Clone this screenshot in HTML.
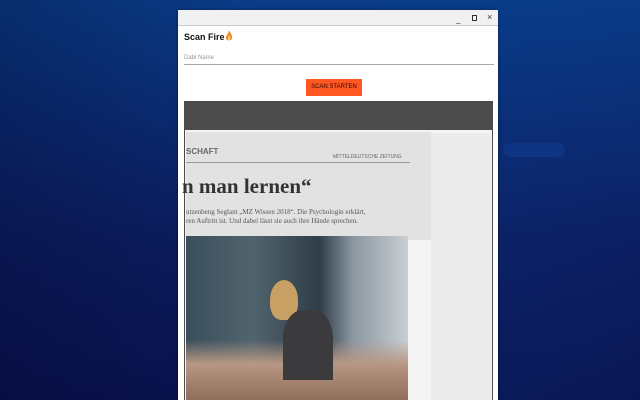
<!DOCTYPE html>
<html><head><style>
*{margin:0;padding:0;box-sizing:border-box}
body{width:640px;height:400px;overflow:hidden;position:relative;font-family:"Liberation Sans",sans-serif;
background:linear-gradient(180deg,#0a3c88 0%,#0b2f78 25%,#0c1d60 60%,#0a1350 100%);}
.abs{position:absolute}
</style></head><body>
<div class="abs" style="left:0;top:0;width:640px;height:400px;background:linear-gradient(90deg,rgba(0,0,30,.25) 0%,rgba(0,0,0,0) 40%,rgba(10,60,140,.15) 80%,rgba(10,50,120,.1) 100%)"></div>
<div class="abs" style="left:503px;top:143px;width:62px;height:14px;background:#14449a;opacity:.4;border-radius:7px"></div>
<div class="abs" style="left:178px;top:10px;width:320px;height:390px;background:#fff;box-shadow:0 0 3px rgba(0,0,0,.4)"></div>
<div class="abs" style="left:178px;top:10px;width:320px;height:16px;background:#f1f1f1;border-bottom:1px solid #ccc"></div>
<div class="abs" style="left:456px;top:15px;font-size:8px;color:#333">_</div>
<div class="abs" style="left:472px;top:15px;width:5px;height:6px;border:1.5px solid #333"></div>
<div class="abs" style="left:487px;top:12px;font-size:9px;color:#333">×</div>
<div class="abs" style="left:184px;top:32px;font-size:9px;font-weight:bold;color:#111">Scan Fire</div>
<svg class="abs" style="left:225px;top:30px" width="8" height="12" viewBox="0 0 8 12"><path d="M4 0C5 3 8 5 7 8.5 6.5 11 1.5 11 1 8.5 0.5 6 3 5 4 0Z" fill="#f08a24"/><path d="M4 5C5 7 6 8 5 10 4 11 2.5 10 3 8.5Z" fill="#fcd06a"/></svg>
<div class="abs" style="left:184px;top:55px;font-size:6px;color:#999">Dabl Name</div>
<div class="abs" style="left:184px;top:64px;width:310px;height:1px;background:#aaa"></div>
<div class="abs" style="left:306px;top:79px;width:56px;height:17px;background:#ff5722;font-size:6px;color:#2a0a00;text-align:center;line-height:17px">SCAN STARTEN</div>
<div class="abs" style="left:184px;top:101px;width:309px;height:299px;background:#4b4b4b"></div>
<div class="abs" style="left:185px;top:130px;width:307px;height:270px;background:#f4f4f4"></div>
<div class="abs" style="left:431px;top:133px;width:60px;height:267px;background:#ebebeb"></div>
<div class="abs" style="left:186px;top:132px;width:245px;height:108px;background:#e2e2e2"></div>
<div class="abs" style="left:186px;top:147px;font-size:8px;font-weight:bold;color:#666">SCHAFT</div>
<div class="abs" style="left:333px;top:154px;font-size:5px;color:#666">MITTELDEUTSCHE ZEITUNG</div>
<div class="abs" style="left:186px;top:162px;width:224px;height:1px;background:#999"></div>
<div class="abs" style="left:182px;top:174px;font-family:'Liberation Serif',serif;font-size:21px;font-weight:bold;color:#333">n man lernen“</div>
<div class="abs" style="left:186px;top:208px;font-family:'Liberation Serif',serif;font-size:7px;color:#555;line-height:9px;width:230px;white-space:nowrap">utzenbeng Seglant „MZ Wissen 2018“. Die Psychologin erklärt,<br>ren Auftritt ist. Und dabei lässt sie auch ihre Hände sprechen.</div>
<div class="abs" style="left:186px;top:236px;width:222px;height:164px;background:linear-gradient(90deg,#3a4f5c 0%,#51646e 30%,#2f3d48 60%,#8a96a0 75%,#c9cfd3 100%)"></div>
<div class="abs" style="left:186px;top:340px;width:222px;height:60px;background:linear-gradient(180deg,rgba(160,130,110,0) 0%,#b89884 40%,#8e6e5a 100%)"></div>
<div class="abs" style="left:270px;top:280px;width:28px;height:40px;border-radius:50% 50% 40% 40%;background:#c9a064"></div>
<div class="abs" style="left:283px;top:310px;width:50px;height:70px;border-radius:40% 40% 0 0;background:#3b3b3d"></div>
</body></html>
